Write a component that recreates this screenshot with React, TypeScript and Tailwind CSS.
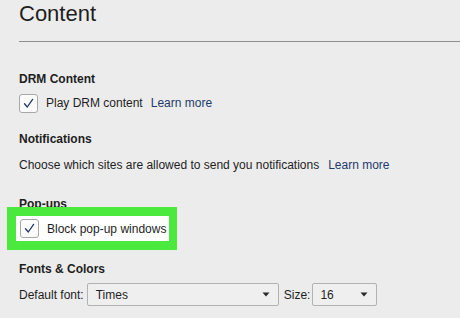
import React from "react";

function Check() {
  return (
    <div className="w-[19px] h-[19px] shrink-0 rounded-[3px] border border-[#a8a8a8] bg-[#fbfbfb] flex items-center justify-center">
      <svg width="13" height="13" viewBox="0 0 13 13">
        <path d="M2.5 6.8 L5.3 10 L10.6 2.4" fill="none" stroke="#1f3a68" strokeWidth="1.3" strokeLinecap="round" strokeLinejoin="round" />
      </svg>
    </div>
  );
}

function Arrow() {
  return (
    <svg width="8" height="5" viewBox="0 0 8 5" className="shrink-0">
      <path d="M0.5 0.5 L7.5 0.5 L4 4.5 Z" fill="#2a2a2a" />
    </svg>
  );
}

export default function App() {
  return (
    <div
      className="w-[460px] h-[318px] overflow-hidden bg-[#ececec] text-[#1e1e1e] flex flex-col"
      style={{ fontFamily: '"Liberation Sans", Arial, sans-serif' }}
    >
      <div className="ml-[19px] h-[42px] border-b border-[#8e8e8e] pt-[1px] shrink-0">
        <div className="text-[22px] leading-[26px]">Content</div>
      </div>

      <div className="px-[19px] flex flex-col">
        <div className="mt-[29px] text-[12px] leading-[16px] font-bold">DRM Content</div>
        <div className="mt-[6px] flex items-center h-[20px]">
          <Check />
          <span className="ml-[8px] text-[12px]">Play DRM content</span>
          <a className="ml-[8px] text-[12px] text-[#1d3a6b]">Learn more</a>
        </div>

        <div className="mt-[18px] text-[12px] leading-[16px] font-bold">Notifications</div>
        <div className="mt-[10px] flex items-center h-[16px] text-[12px]">
          <span>Choose which sites are allowed to send you notifications</span>
          <a className="ml-[9px] text-[#1d3a6b]">Learn more</a>
        </div>

        <div className="mt-[23px] text-[12px] leading-[16px] font-bold">Pop-ups</div>
        <div className="relative z-10 mt-[-5px] ml-[-12px] w-[170px] bg-[#4be93d] p-[9px] pr-[8px]">
          <div className="bg-white h-[25px] flex items-center pl-[4px]">
            <Check />
            <span className="ml-[8px] text-[12px]">Block pop-up windows</span>
          </div>
        </div>

        <div className="mt-[11px] text-[12px] leading-[16px] font-bold">Fonts &amp; Colors</div>
        <div className="mt-[6px] flex items-center text-[12px]">
          <span>Default font:</span>
          <div className="ml-[3px] w-[192px] h-[23px] border border-[#b2b2b2] rounded-[2px] bg-[#efefef] flex items-center pl-[8px] pr-[8px] justify-between">
            <span>Times</span>
            <Arrow />
          </div>
          <span className="ml-[5px]">Size:</span>
          <div className="ml-[2px] w-[65px] h-[23px] border border-[#b2b2b2] rounded-[2px] bg-[#efefef] flex items-center pl-[7px] pr-[8px] justify-between">
            <span>16</span>
            <Arrow />
          </div>
        </div>
      </div>
    </div>
  );
}
